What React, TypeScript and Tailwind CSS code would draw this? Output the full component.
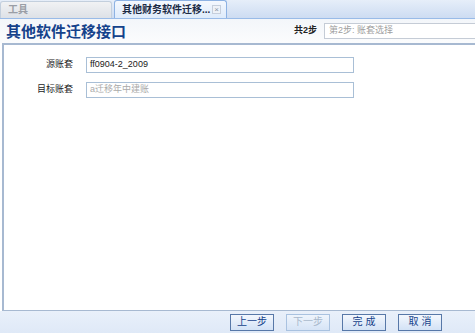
import React from "react";

const cjk = "font-['Liberation_Sans','Noto_Sans_CJK_SC',sans-serif]";

const Tab = ({ label, active }: { label: string; active?: boolean }) => (
  <div
    className={
      active
        ? "ml-[2px] flex h-[18px] w-[113px] items-center justify-between rounded-t-[3px] border border-b-0 border-[#8db2e3] bg-gradient-to-b from-[#f4f8fe] to-[#deebfb] pl-[7px] pr-[5px]"
        : "flex h-[17px] w-[112px] items-center rounded-t-[3px] border border-b-0 border-[#c3cfdd] bg-gradient-to-b from-[#f1f2f4] to-[#dde1e7] pl-[7px]"
    }
  >
    <span
      className={
        active
          ? "whitespace-nowrap text-[10px] font-bold leading-none text-[#1b2a44]"
          : "whitespace-nowrap text-[10px] font-bold leading-none text-[#9a9ea6]"
      }
    >
      {label}
    </span>
    {active && (
      <span className="flex h-[9px] w-[9px] shrink-0 items-center justify-center border border-[#c6cfdc] bg-[#eef2f8] text-[8px] leading-none text-[#8a95a6]">
        ×
      </span>
    )}
  </div>
);

const Button = ({ label, disabled }: { label: string; disabled?: boolean }) => (
  <button
    disabled={disabled}
    className={
      disabled
        ? "h-[17px] w-[44px] border border-[#a9c2e0] bg-gradient-to-b from-[#eef4fc] to-[#d6e4f6] text-[10px] leading-none text-[#a8b8cc]"
        : "h-[17px] w-[44px] border border-[#5778a8] bg-gradient-to-b from-[#f3f7fd] to-[#d3e2f6] text-[10px] leading-none text-[#15428b]"
    }
  >
    {label}
  </button>
);

const Field = ({ label, value, placeholder }: { label: string; value?: string; placeholder?: string }) => (
  <div className="flex items-center gap-[13px]">
    <span className="w-[69px] text-right text-[9px] text-[#222]">{label}</span>
    <div className="flex h-[16px] w-[268px] items-center border border-[#a9bfd6] bg-white px-[3px] text-[9px]">
      {value ? (
        <span className="text-[#1a1a1a]">{value}</span>
      ) : (
        <span className="text-[#aaaaaa]">{placeholder}</span>
      )}
    </div>
  </div>
);

export default function App() {
  return (
    <div className={`flex h-[333px] w-[475px] flex-col overflow-hidden bg-white ${cjk}`}>
      <div className="flex h-[19px] items-end border-b border-[#99bbe8] bg-gradient-to-b from-[#e6eef9] to-[#cddcf2]">
        <Tab label="工具" />
        <Tab label="其他财务软件迁移..." active />
      </div>

      <div className="flex h-[24px] items-center justify-between bg-gradient-to-b from-[#f3f6fa] to-[#fbfcfd] pl-[6px]">
        <span className="text-[15px] font-bold leading-none text-[#15428b]">其他软件迁移接口</span>
        <div className="flex items-center gap-[7px]">
          <span className="text-[9px] font-bold text-[#222]">共2步</span>
          <div className="flex h-[16px] w-[151px] items-center border border-r-0 border-[#c5ccd6] bg-white px-[4px] text-[9px] text-[#a0a0a0]">
            第2步: 账套选择
          </div>
        </div>
      </div>

      <div className="ml-[2px] flex flex-1 flex-col gap-[9px] border-t-2 border-b border-l-2 border-[#a7b9d1] bg-white pt-[12px]">
        <Field label="源账套" value="ff0904-2_2009" />
        <Field label="目标账套" placeholder="a迁移年中建账" />
      </div>

      <div className="flex h-[22px] items-center justify-end gap-[12px] bg-gradient-to-b from-[#e9f0fa] to-[#dfe9f7] pr-[33px]">
        <Button label="上一步" />
        <Button label="下一步" disabled />
        <Button label="完 成" />
        <Button label="取 消" />
      </div>
    </div>
  );
}
